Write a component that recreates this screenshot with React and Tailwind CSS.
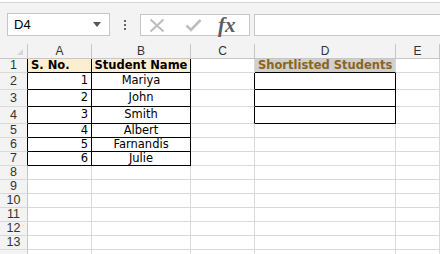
import React from 'react';

const cols = [28, 64, 99, 64, 141]; // row header, A, B, C, D (E takes the rest)
const rowHeights = [14, 17, 17, 17, 14, 14, 14, 14, 14, 14, 14, 14, 14, 14];

const students = ['Mariya', 'John', 'Smith', 'Albert', 'Farnandis', 'Julie'];

const cellFont = { fontFamily: '"DejaVu Sans", Verdana, sans-serif' };
const headFont = { fontFamily: '"Liberation Sans", Arial, sans-serif' };

const Toolbar = () => (
    <div className="h-[44px] bg-white">
        <div className="h-[2px] bg-white" />
        <div className="h-[42px] border-t border-[#d5d5d5] bg-[#f3f3f3] flex items-start pt-[10px]">
            {/* name box */}
            <div className="ml-[7px] w-[103px] h-[23px] bg-white border border-[#c6c6c6] flex items-center justify-between pl-[6px] pr-[8px]">
                <span className="text-[13px] text-black leading-none" style={headFont}>D4</span>
                <svg width="8" height="5" viewBox="0 0 8 5"><path d="M0 0h8L4 5z" fill="#555" /></svg>
            </div>
            {/* dots */}
            <div className="w-[30px] h-[23px] flex flex-col items-center justify-center gap-[2px]">
                <div className="w-[2px] h-[2px] bg-[#666]" />
                <div className="w-[2px] h-[2px] bg-[#666]" />
                <div className="w-[2px] h-[2px] bg-[#666]" />
            </div>
            {/* cancel / enter / fx */}
            <div className="w-[110px] h-[22px] mt-[1px] bg-white border border-[#c6c6c6] flex items-center">
                <svg className="ml-[8px]" width="16" height="15" viewBox="0 0 16 15">
                    <path d="M1.5 1.5l13 12M14.5 1.5l-13 12" stroke="#bdbdbd" strokeWidth="2" />
                </svg>
                <svg className="ml-[20px]" width="17" height="14" viewBox="0 0 17 14">
                    <path d="M1.5 7.5l4.5 4.5L15.5 2" stroke="#bdbdbd" strokeWidth="2.6" fill="none" />
                </svg>
                <span
                    className="ml-[16px] text-[21px] italic font-bold text-[#5d5d5d] leading-none"
                    style={{ fontFamily: '"Liberation Serif", "Times New Roman", serif' }}
                >
                    fx
                </span>
            </div>
            <div className="ml-[4px] flex-1 h-[22px] mt-[1px] bg-white border border-[#c6c6c6] border-r-0" />
        </div>
    </div>
);

const Cell = ({ className = '', color = 'text-black', children }) => (
    <div
        className={`border-r border-b border-[#d9d9d9] flex items-center overflow-hidden whitespace-nowrap text-[11.5px] ${color} ${className}`}
        style={cellFont}
    >
        {children}
    </div>
);

const App = () => {
    return (
        <div className="w-[440px] h-[254px] overflow-hidden bg-white">
            <Toolbar />
            <div
                className="grid"
                style={{
                    gridTemplateColumns: `${cols.map((c) => c + 'px').join(' ')} 1fr`,
                    gridTemplateRows: `15px ${rowHeights.map((h) => h + 'px').join(' ')}`,
                }}
            >
                {/* column headers */}
                <div className="bg-[#f3f3f3] border-r border-b border-[#c6c6c6] relative">
                    <svg className="absolute right-[4px] bottom-[3px]" width="6" height="6" viewBox="0 0 6 6">
                        <path d="M6 0v6H0z" fill="#d6d6d6" />
                    </svg>
                </div>
                {['A', 'B', 'C', 'D', 'E'].map((l) => (
                    <div
                        key={l}
                        className="bg-[#f3f3f3] border-r border-b border-[#c6c6c6] flex items-center justify-center text-[12px] text-[#333] leading-none"
                        style={headFont}
                    >
                        {l}
                    </div>
                ))}

                {rowHeights.map((h, i) => {
                    const r = i + 1;
                    const inTable = r <= 7;
                    const inList = r >= 2 && r <= 4;
                    return (
                        <React.Fragment key={r}>
                            <div
                                className={`bg-[#f3f3f3] border-r border-b border-b-[#d9d9d9] flex items-center justify-center text-[12.5px] text-[#333] leading-none ${inTable ? 'border-r-black' : 'border-r-[#c6c6c6]'}`}
                                style={headFont}
                            >
                                {r <= 13 ? r : ''}
                            </div>
                            {/* A */}
                            <Cell
                                className={`${inTable ? 'border-r-black border-b-black' : ''} ${r === 1 ? 'bg-[#fdeed2] font-bold justify-start pl-[3px]' : 'justify-end pr-[3px]'}`}
                            >
                                {r === 1 ? 'S. No.' : inTable ? r - 1 : ''}
                            </Cell>
                            {/* B */}
                            <Cell
                                className={`justify-center ${inTable ? 'border-r-black border-b-black' : ''} ${r === 1 ? 'bg-[#fdeed2] font-bold' : ''}`}
                            >
                                {r === 1 ? 'Student Name' : inTable ? students[r - 2] : ''}
                            </Cell>
                            {/* C */}
                            <Cell className={inList ? 'border-r-black' : ''} />
                            {/* D */}
                            <Cell
                                color={r === 1 ? 'text-[#8c6516]' : 'text-black'}
                                className={`${r === 1 ? 'bg-[#d2cfcf] border-b-black font-bold pl-[3px]' : ''} ${inList ? 'border-r-black border-b-black' : ''}`}
                            >
                                {r === 1 ? 'Shortlisted Students' : ''}
                            </Cell>
                            {/* E */}
                            <Cell />
                        </React.Fragment>
                    );
                })}
            </div>
        </div>
    );
};

export default App;
